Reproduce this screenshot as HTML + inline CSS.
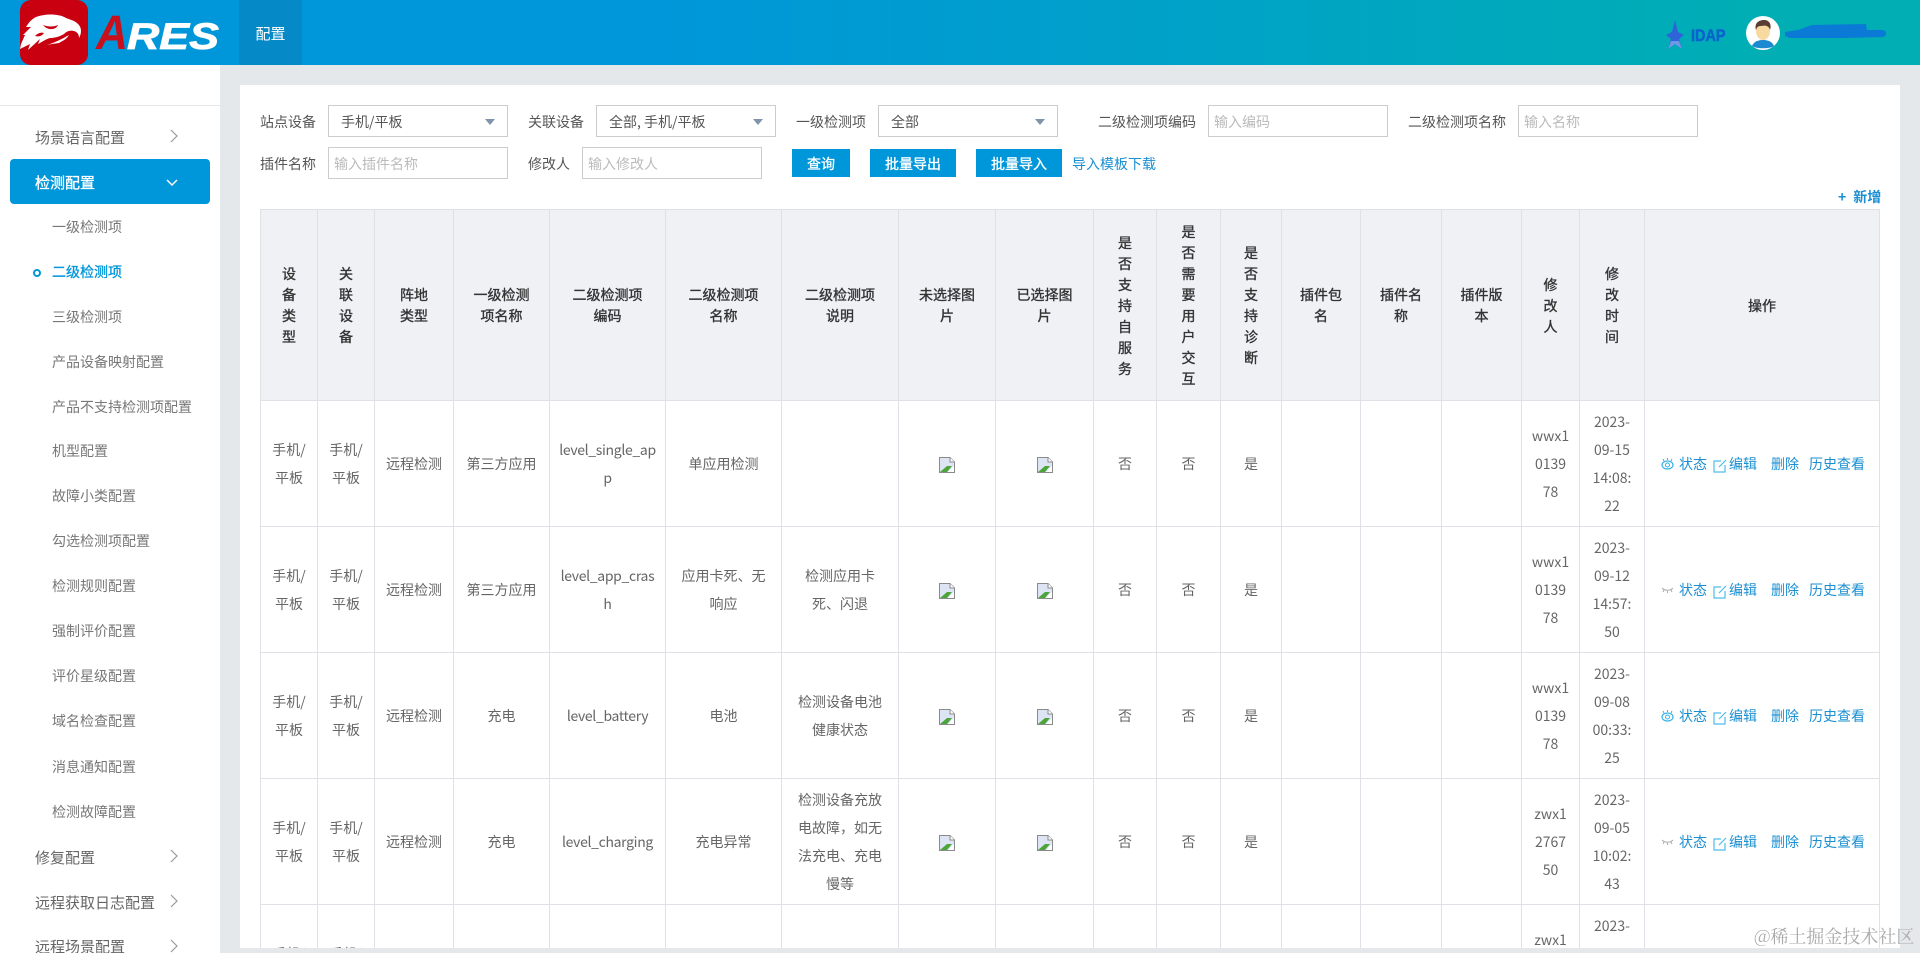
<!DOCTYPE html>
<html lang="zh"><head><meta charset="utf-8"><title>ARES</title>
<style>
*{box-sizing:border-box}
html,body{margin:0;padding:0;width:1920px;height:953px;overflow:hidden}
body{font-family:"Noto Sans CJK SC","Liberation Sans",sans-serif;font-size:14px;color:#666}
#root{position:relative;width:1920px;height:953px;background:#e4e8eb;overflow:hidden}
.t{position:absolute;white-space:nowrap;line-height:20px}
#hd{position:absolute;left:0;top:0;width:1920px;height:65px;background:linear-gradient(90deg,#0096da 0%,#0096da 33%,#00aeb4 92%,#00aeb4 100%)}
#nav{position:absolute;left:239px;top:0;width:63px;height:65px;background:#0589c7;color:#fff;font-size:15px;line-height:67px;text-align:center}
#side{position:absolute;left:0;top:65px;width:220px;height:888px;background:#fff}
#line{position:absolute;left:0;top:105px;width:220px;height:1px;background:#e8e8e8}
.m{font-size:15px;color:#666;left:35px;margin-top:1px}
.s{font-size:14px;color:#777;left:52px}
#act{position:absolute;left:10px;top:159px;width:200px;height:45px;background:#0096da;border-radius:4px}
#card{position:absolute;left:240px;top:85px;width:1660px;height:863px;background:#fff}
.box{position:absolute;height:32px;border:1px solid #ccc;background:#fff;line-height:32px;padding-left:12px;color:#555;white-space:nowrap}
.ph{color:#bbb;padding-left:5px}
.box i{position:absolute;right:12px;top:13px;width:0;height:0;border-left:5px solid transparent;border-right:5px solid transparent;border-top:6px solid #7f94a8}
.lb{color:#555;margin-top:1px}
.btn{position:absolute;top:149px;height:28px;background:#0096da;color:#fff;text-align:center;line-height:30px;-webkit-text-stroke:.3px #fff}
#tw{position:absolute;left:260px;top:209px;width:1620px;height:739px;overflow:hidden}
table{border-collapse:separate;border-spacing:0;table-layout:fixed;width:1620px}
th,td{border-left:1px solid #dfe1e6;border-top:1px solid #dfe1e6;text-align:center;vertical-align:middle;padding:1px 0 0;white-space:nowrap;overflow:hidden}
tr>*:last-child{border-right:1px solid #dfe1e6}
th{background:#eff1f5;color:#333;height:191px;line-height:21px;font-weight:400;font-size:14px;padding-top:2px;-webkit-text-stroke:.35px #333}
td{height:126px;line-height:28px;color:#666;background:#fff}
td svg.b{vertical-align:-7px;position:relative;top:-3px}
.l{letter-spacing:-.33px}
.ops{display:flex;align-items:center;color:#1b8fd1;height:28px;padding-left:16px;line-height:28px}
.wm{position:absolute;left:1754px;top:924px;font-size:18px;line-height:24px;color:#aaa;white-space:nowrap;font-family:"Noto Serif CJK SC","Noto Sans CJK SC",serif}
</style></head><body>
<div id="root">
<div id="hd">
 <svg width="240" height="65" style="position:absolute;left:0;top:0">
  <rect x="20" y="0" width="68" height="65" rx="11" fill="#c8000f"/>
  <path d="M36 17 C44 14 58 13 66 18 L74 21 C79 24 81 27 81 31 C81 34 80 36 79 38 C79 34 77 32 74 31 C70 30 67 31 64 34 C59 37 54 38 50 38 C46 39 42 42 38 44 L40 39 L28 50 L30 44 L20 49 L21 44 L25 35 L23 35 L31 27 L26 27 C29 22 32 19 36 17Z" fill="#fff"/>
  <path d="M47 45 C54 43 62 39 69 35 C66 40 62 41 59 43 L52 44Z" fill="#fff"/>
  <path d="M43 25 C48 27 54 27 58 25 C56 30 48 31 43 25Z" fill="#c8000f"/>
  <path d="M35 36 C38 33 41 32 44 33 C42 36 39 37 35 36Z" fill="#c8000f"/>
  <text x="96" y="49" font-family="Liberation Sans" font-weight="700" font-style="italic" font-size="48" fill="#c8101c" textLength="32" lengthAdjust="spacingAndGlyphs">A</text>
  <text x="127" y="49" font-family="Liberation Sans" font-weight="700" font-style="italic" font-size="37" fill="#fff" stroke="#fff" stroke-width=".8" textLength="92" lengthAdjust="spacingAndGlyphs">RES</text>
 </svg>
 <div id="nav">配置</div>
 <svg width="20" height="32" style="position:absolute;left:1665px;top:19px">
  <path d="M10 1 L13 13 L19 16 L14 20 L17 30 L10 25 L3 30 L6 20 L1 16 L7 13Z" fill="#2f63d8"/>
  <path d="M3 30 L6 22 L14 22 L17 30 L10 25Z" fill="#6f97e6"/>
 </svg>
 <div class="t" style="left:1691px;top:26px;font-family:'Liberation Sans';font-weight:700;font-size:17px;color:#0a62cf;-webkit-text-stroke:.5px #0a62cf;transform:scaleX(.85);transform-origin:0 50%">IDAP</div>
 <svg width="34" height="34" style="position:absolute;left:1746px;top:16px">
  <circle cx="17" cy="17" r="17" fill="#fff"/>
  <path d="M6 30 C8 25 13 24 17 24 C21 24 26 25 28 30 C24 33 10 33 6 30Z" fill="#1b8ad0"/>
  <ellipse cx="17" cy="15" rx="7" ry="9" fill="#f8d9a0"/>
  <path d="M10 14 C8 7 13 4 18 4 C23 4 26 8 24 14 C23 10 20 9 15 10 C12 10 11 11 10 14Z" fill="#5a3d33"/>
 </svg>
 <svg width="110" height="20" style="position:absolute;left:1782px;top:22px">
  <path d="M3 10 L16 8 L30 3 L84 2 L85 8 L101 8 C105 9 105 14 101 15 L60 16 L8 16 L3 14Z" fill="#0a7ad6"/>
 </svg>
</div>
<div id="side"></div>
<div id="line"></div>
<div id="act"></div>
<div class="t m" style="top:127px">场景语言配置</div>
<svg width="10" height="14" style="position:absolute;left:169px;top:129px"><path d="M2 1 L8 7 L2 13" fill="none" stroke="#999" stroke-width="1.2"/></svg>
<div class="t m" style="top:172px;color:#fff;-webkit-text-stroke:.3px #fff">检测配置</div>
<svg width="14" height="10" style="position:absolute;left:165px;top:178px"><path d="M2 2 L7 7 L12 2" fill="none" stroke="#fff" stroke-width="1.5"/></svg>
<div class="t s" style="top:217px">一级检测项</div>
<div style="position:absolute;left:33px;top:268.500px;width:8px;height:8px;border:2px solid #0096da;border-radius:50%"></div>
<div class="t s" style="top:262px;color:#0096da;-webkit-text-stroke:.3px #0096da">二级检测项</div>
<div class="t s" style="top:307px">三级检测项</div>
<div class="t s" style="top:352px">产品设备映射配置</div>
<div class="t s" style="top:397px">产品不支持检测项配置</div>
<div class="t s" style="top:441px">机型配置</div>
<div class="t s" style="top:486px">故障小类配置</div>
<div class="t s" style="top:531px">勾选检测项配置</div>
<div class="t s" style="top:576px">检测规则配置</div>
<div class="t s" style="top:621px">强制评价配置</div>
<div class="t s" style="top:666px">评价星级配置</div>
<div class="t s" style="top:711px">域名检查配置</div>
<div class="t s" style="top:757px">消息通知配置</div>
<div class="t s" style="top:802px">检测故障配置</div>
<div class="t m" style="top:847px">修复配置</div>
<svg width="10" height="14" style="position:absolute;left:169px;top:849px"><path d="M2 1 L8 7 L2 13" fill="none" stroke="#999" stroke-width="1.2"/></svg>
<div class="t m" style="top:892px">远程获取日志配置</div>
<svg width="10" height="14" style="position:absolute;left:169px;top:894px"><path d="M2 1 L8 7 L2 13" fill="none" stroke="#999" stroke-width="1.2"/></svg>
<div class="t m" style="top:936px">远程场景配置</div>
<svg width="10" height="14" style="position:absolute;left:169px;top:939px"><path d="M2 1 L8 7 L2 13" fill="none" stroke="#999" stroke-width="1.2"/></svg>

<div id="card"></div>
<div class="t lb" style="left:260px;top:111px">站点设备</div>
<div class="box" style="left:328px;top:105px;width:180px">手机/平板<i></i></div>
<div class="t lb" style="left:528px;top:111px">关联设备</div>
<div class="box" style="left:596px;top:105px;width:180px">全部, 手机/平板<i></i></div>
<div class="t lb" style="left:796px;top:111px">一级检测项</div>
<div class="box" style="left:878px;top:105px;width:180px">全部<i></i></div>
<div class="t lb" style="left:1098px;top:111px">二级检测项编码</div>
<div class="box ph" style="left:1208px;top:105px;width:180px">输入编码</div>
<div class="t lb" style="left:1408px;top:111px">二级检测项名称</div>
<div class="box ph" style="left:1518px;top:105px;width:180px">输入名称</div>
<div class="t lb" style="left:260px;top:153px">插件名称</div>
<div class="box ph" style="left:328px;top:147px;width:180px">输入插件名称</div>
<div class="t lb" style="left:528px;top:153px">修改人</div>
<div class="box ph" style="left:582px;top:147px;width:180px">输入修改人</div>
<div class="btn" style="left:792px;width:58px">查询</div>
<div class="btn" style="left:870px;width:86px">批量导出</div>
<div class="btn" style="left:976px;width:86px">批量导入</div>
<div class="t" style="left:1072px;top:154px;color:#1b8fd1">导入模板下载</div>
<div class="t" style="left:1838px;top:187px;color:#1b8fd1;font-weight:700"><span style="margin-right:7px">+</span>新增</div>

<div id="tw">
<table>
<colgroup><col style="width:57px"><col style="width:57px"><col style="width:79px"><col style="width:96px"><col style="width:116px"><col style="width:116px"><col style="width:117px"><col style="width:97px"><col style="width:98px"><col style="width:63px"><col style="width:64px"><col style="width:61px"><col style="width:79px"><col style="width:81px"><col style="width:80px"><col style="width:58px"><col style="width:65px"><col style="width:236px"></colgroup>
<tr>
<th>设<br>备<br>类<br>型</th><th>关<br>联<br>设<br>备</th><th>阵地<br>类型</th><th>一级检测<br>项名称</th><th>二级检测项<br>编码</th><th>二级检测项<br>名称</th><th>二级检测项<br>说明</th><th>未选择图<br>片</th><th>已选择图<br>片</th><th>是<br>否<br>支<br>持<br>自<br>服<br>务</th><th>是<br>否<br>需<br>要<br>用<br>户<br>交<br>互</th><th>是<br>否<br>支<br>持<br>诊<br>断</th><th>插件包<br>名</th><th>插件名<br>称</th><th>插件版<br>本</th><th>修<br>改<br>人</th><th>修<br>改<br>时<br>间</th><th>操作</th>
</tr>
<tr>
<td>手机/<br>平板</td><td>手机/<br>平板</td><td>远程检测</td><td>第三方应用</td><td class="l">level_single_ap<br>p</td><td>单应用检测</td><td></td>
<td><svg class="b" width="16" height="16" viewBox="0 0 16 16"><path d="M.5.5H11L15.500 5V15.500H.5Z" fill="#dde4f4" stroke="#8a8a8a"/><path d="M11 .5V5H15.500" fill="#fff" stroke="#8a8a8a"/><path d="M1 15 L8 9 L13 9 L8 15Z" fill="#4ca53a"/><path d="M9 15 L15 9 V15Z" fill="#fff"/></svg></td>
<td><svg class="b" width="16" height="16" viewBox="0 0 16 16"><path d="M.5.5H11L15.500 5V15.500H.5Z" fill="#dde4f4" stroke="#8a8a8a"/><path d="M11 .5V5H15.500" fill="#fff" stroke="#8a8a8a"/><path d="M1 15 L8 9 L13 9 L8 15Z" fill="#4ca53a"/><path d="M9 15 L15 9 V15Z" fill="#fff"/></svg></td>
<td>否</td><td>否</td><td>是</td><td></td><td></td><td></td><td>wwx1<br>0139<br>78</td><td>2023-<br>09-15<br>14:08:<br>22</td>
<td><div class="ops"><svg width="13" height="12" viewBox="0 0 13 12" style="margin-right:5px"><ellipse cx="6.500" cy="7" rx="5.500" ry="4" fill="none" stroke="#37b3e6" stroke-width="1.200"/><circle cx="6.500" cy="7" r="2" fill="none" stroke="#37b3e6"/><path d="M3 3 L2 1 M6.500 2 V0 M10 3 L11 1" stroke="#37b3e6"/></svg><span>状态</span><svg width="14" height="14" viewBox="0 0 14 14" style="margin:3px 2px 0 6px"><path d="M8 2H1V13H12V6" fill="none" stroke="#4fbce9" stroke-width="1.200"/><path d="M6 8 L13 1" stroke="#4fbce9" stroke-width="1.200"/></svg><span>编辑</span><span style="margin-left:14px">删除</span><span style="margin-left:10px">历史查看</span></div></td>
</tr>
<tr>
<td>手机/<br>平板</td><td>手机/<br>平板</td><td>远程检测</td><td>第三方应用</td><td class="l">level_app_cras<br>h</td><td>应用卡死、无<br>响应</td><td>检测应用卡<br>死、闪退</td>
<td><svg class="b" width="16" height="16" viewBox="0 0 16 16"><path d="M.5.5H11L15.500 5V15.500H.5Z" fill="#dde4f4" stroke="#8a8a8a"/><path d="M11 .5V5H15.500" fill="#fff" stroke="#8a8a8a"/><path d="M1 15 L8 9 L13 9 L8 15Z" fill="#4ca53a"/><path d="M9 15 L15 9 V15Z" fill="#fff"/></svg></td>
<td><svg class="b" width="16" height="16" viewBox="0 0 16 16"><path d="M.5.5H11L15.500 5V15.500H.5Z" fill="#dde4f4" stroke="#8a8a8a"/><path d="M11 .5V5H15.500" fill="#fff" stroke="#8a8a8a"/><path d="M1 15 L8 9 L13 9 L8 15Z" fill="#4ca53a"/><path d="M9 15 L15 9 V15Z" fill="#fff"/></svg></td>
<td>否</td><td>否</td><td>是</td><td></td><td></td><td></td><td>wwx1<br>0139<br>78</td><td>2023-<br>09-12<br>14:57:<br>50</td>
<td><div class="ops"><svg width="13" height="12" viewBox="0 0 13 12" style="margin-right:5px"><path d="M1 4 C4 7 9 7 12 4 M3 6 L2 8 M6.500 7 V9 M10 6 L11 8" fill="none" stroke="#aaa"/></svg><span>状态</span><svg width="14" height="14" viewBox="0 0 14 14" style="margin:3px 2px 0 6px"><path d="M8 2H1V13H12V6" fill="none" stroke="#4fbce9" stroke-width="1.200"/><path d="M6 8 L13 1" stroke="#4fbce9" stroke-width="1.200"/></svg><span>编辑</span><span style="margin-left:14px">删除</span><span style="margin-left:10px">历史查看</span></div></td>
</tr>
<tr>
<td>手机/<br>平板</td><td>手机/<br>平板</td><td>远程检测</td><td>充电</td><td class="l">level_battery</td><td>电池</td><td>检测设备电池<br>健康状态</td>
<td><svg class="b" width="16" height="16" viewBox="0 0 16 16"><path d="M.5.5H11L15.500 5V15.500H.5Z" fill="#dde4f4" stroke="#8a8a8a"/><path d="M11 .5V5H15.500" fill="#fff" stroke="#8a8a8a"/><path d="M1 15 L8 9 L13 9 L8 15Z" fill="#4ca53a"/><path d="M9 15 L15 9 V15Z" fill="#fff"/></svg></td>
<td><svg class="b" width="16" height="16" viewBox="0 0 16 16"><path d="M.5.5H11L15.500 5V15.500H.5Z" fill="#dde4f4" stroke="#8a8a8a"/><path d="M11 .5V5H15.500" fill="#fff" stroke="#8a8a8a"/><path d="M1 15 L8 9 L13 9 L8 15Z" fill="#4ca53a"/><path d="M9 15 L15 9 V15Z" fill="#fff"/></svg></td>
<td>否</td><td>否</td><td>是</td><td></td><td></td><td></td><td>wwx1<br>0139<br>78</td><td>2023-<br>09-08<br>00:33:<br>25</td>
<td><div class="ops"><svg width="13" height="12" viewBox="0 0 13 12" style="margin-right:5px"><ellipse cx="6.500" cy="7" rx="5.500" ry="4" fill="none" stroke="#37b3e6" stroke-width="1.200"/><circle cx="6.500" cy="7" r="2" fill="none" stroke="#37b3e6"/><path d="M3 3 L2 1 M6.500 2 V0 M10 3 L11 1" stroke="#37b3e6"/></svg><span>状态</span><svg width="14" height="14" viewBox="0 0 14 14" style="margin:3px 2px 0 6px"><path d="M8 2H1V13H12V6" fill="none" stroke="#4fbce9" stroke-width="1.200"/><path d="M6 8 L13 1" stroke="#4fbce9" stroke-width="1.200"/></svg><span>编辑</span><span style="margin-left:14px">删除</span><span style="margin-left:10px">历史查看</span></div></td>
</tr>
<tr>
<td>手机/<br>平板</td><td>手机/<br>平板</td><td>远程检测</td><td>充电</td><td class="l">level_charging</td><td>充电异常</td><td>检测设备充放<br>电故障，如无<br>法充电、充电<br>慢等</td>
<td><svg class="b" width="16" height="16" viewBox="0 0 16 16"><path d="M.5.5H11L15.500 5V15.500H.5Z" fill="#dde4f4" stroke="#8a8a8a"/><path d="M11 .5V5H15.500" fill="#fff" stroke="#8a8a8a"/><path d="M1 15 L8 9 L13 9 L8 15Z" fill="#4ca53a"/><path d="M9 15 L15 9 V15Z" fill="#fff"/></svg></td>
<td><svg class="b" width="16" height="16" viewBox="0 0 16 16"><path d="M.5.5H11L15.500 5V15.500H.5Z" fill="#dde4f4" stroke="#8a8a8a"/><path d="M11 .5V5H15.500" fill="#fff" stroke="#8a8a8a"/><path d="M1 15 L8 9 L13 9 L8 15Z" fill="#4ca53a"/><path d="M9 15 L15 9 V15Z" fill="#fff"/></svg></td>
<td>否</td><td>否</td><td>是</td><td></td><td></td><td></td><td>zwx1<br>2767<br>50</td><td>2023-<br>09-05<br>10:02:<br>43</td>
<td><div class="ops"><svg width="13" height="12" viewBox="0 0 13 12" style="margin-right:5px"><path d="M1 4 C4 7 9 7 12 4 M3 6 L2 8 M6.500 7 V9 M10 6 L11 8" fill="none" stroke="#aaa"/></svg><span>状态</span><svg width="14" height="14" viewBox="0 0 14 14" style="margin:3px 2px 0 6px"><path d="M8 2H1V13H12V6" fill="none" stroke="#4fbce9" stroke-width="1.200"/><path d="M6 8 L13 1" stroke="#4fbce9" stroke-width="1.200"/></svg><span>编辑</span><span style="margin-left:14px">删除</span><span style="margin-left:10px">历史查看</span></div></td>
</tr>
<tr>
<td>手机/<br>平板</td><td>手机/<br>平板</td><td></td><td></td><td></td><td></td><td></td><td></td><td></td><td></td><td></td><td></td><td></td><td></td><td></td><td>zwx1<br>2767<br>50</td><td>2023-<br>09-05<br>10:02:<br>43</td><td></td>
</tr>
</table>
</div>
<div class="wm">@稀土掘金技术社区</div>
</div>
</body></html>
